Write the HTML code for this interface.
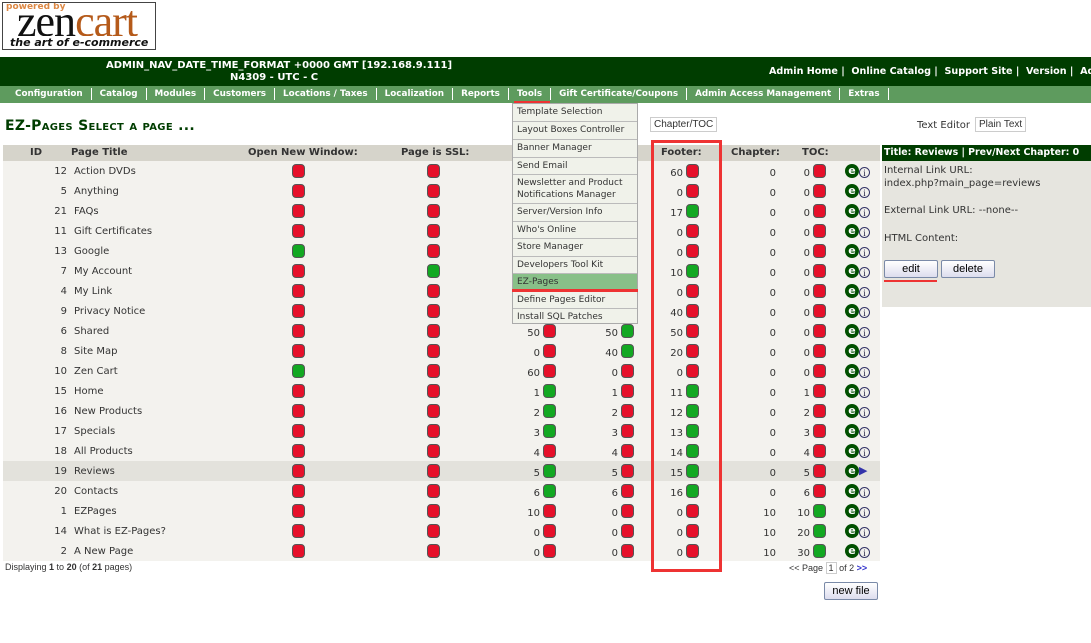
<!DOCTYPE html>
<html><head><meta charset="utf-8"><style>
*{margin:0;padding:0;box-sizing:border-box}
body{width:1091px;height:643px;position:relative;background:#fff;font-family:"DejaVu Sans","Liberation Sans",sans-serif;font-size:10px;color:#333;overflow:hidden}
.abs{position:absolute}
#logo{left:2px;top:2px;width:154px;height:48px;border:1px solid #444;background:#fff;overflow:hidden}
#top{left:0;top:57px;width:1091px;height:29px;background:#003d00;color:#fff;font-weight:bold;font-size:10px}
#nav{left:0;top:86px;width:1091px;height:17px;background:#5e9b5e;color:#fff;font-weight:bold;font-size:8.8px;line-height:17px;white-space:nowrap}
#nav span{display:inline-block;padding:0 8px;border-right:1px solid #fff;line-height:12px}
h1{position:absolute;left:5px;top:118px;font-size:14px;color:#003d00;font-weight:bold;font-variant:small-caps;letter-spacing:.3px}
.bg{left:3px;width:877px;height:20px;background:#f3f2ee}
#hdr{left:3px;top:145px;width:877px;height:16px;background:#d6d4cb;font-weight:bold;font-size:10px;color:#333;line-height:16px}
.r{position:absolute;left:0;width:1091px;height:20px;line-height:20px;font-size:10px;color:#333}
.r span{position:absolute}
.n{text-align:right;width:30px;top:3px}
.r span.n:first-child{top:1px}
.ic{width:13px;height:14px;border-radius:4px;top:3px;border:1px solid #555}
.R{background:#e6102a}.G{background:#12a822}
.e{width:14px;height:14px;border-radius:7px;background:#005000;color:#fff;font-weight:bold;font-size:11px;line-height:13px;text-align:center;top:3px}
.i{width:11px;height:11px;border-radius:6px;border:1px solid #336;color:#224;font-size:9px;line-height:10px;text-align:center;top:6px;font-family:"Liberation Serif",serif}
#menu{left:512px;top:103px;width:126px;height:221px;background:#f0f2ea;border:1px solid #aaa;font-size:9px;color:#333}
#menu div{border-bottom:1px solid #bbb;padding:2px 4px;height:18px;line-height:13px;white-space:nowrap}
.btn{border:1px solid #7a8aa8;background:linear-gradient(#fff,#dde);font-family:"Liberation Sans",sans-serif;font-size:11px;text-align:center;border-radius:2px;color:#000}
</style></head><body>
<div id="logo" class="abs">
<div class="abs" style="left:3px;top:0;color:#d84;font-size:9px;font-weight:bold;line-height:9px;background:#fff;z-index:2">powered by</div>
<div class="abs" style="left:14px;top:0px;font-family:'Liberation Serif',serif;font-size:44px;line-height:38px;letter-spacing:-1px"><span style="color:#111">zen</span><span style="color:#b55a1a">cart</span></div>
<div class="abs" style="left:7px;top:33px;font-size:11px;font-weight:bold;font-style:italic;color:#111;background:#fff">the art of e-commerce</div>
</div>
<div id="top" class="abs">
<div class="abs" style="left:106px;top:3px">ADMIN_NAV_DATE_TIME_FORMAT +0000 GMT [192.168.9.111]</div>
<div class="abs" style="left:230px;top:15px">N4309 - UTC - C</div>
<div class="abs" style="left:769px;top:9px;white-space:nowrap;font-size:9.6px">Admin Home |&nbsp; Online Catalog |&nbsp; Support Site |&nbsp; Version |&nbsp; Ad</div>
</div>
<div id="nav" class="abs"><span style="padding-left:15px">Configuration</span><span>Catalog</span><span>Modules</span><span>Customers</span><span>Locations / Taxes</span><span>Localization</span><span>Reports</span><span>Tools</span><span>Gift Certificate/Coupons</span><span>Admin Access Management</span><span>Extras</span></div>
<div class="abs" style="left:514px;top:101px;width:36px;height:2px;background:#e33"></div>
<h1>EZ-Pages Select a page ...</h1>
<div class="abs" style="left:650px;top:117px;border:1px solid #ccc;font-family:'Liberation Sans',sans-serif;font-size:10px;padding:1px 3px">Chapter/TOC</div>
<div class="abs" style="left:917px;top:120px;font-size:10px">Text Editor</div>
<div class="abs" style="left:975px;top:117px;border:1px solid #ccc;font-family:'Liberation Sans',sans-serif;font-size:10px;padding:1px 3px">Plain Text</div>

<div id="hdr" class="abs"><span class="abs" style="left:27px">ID</span><span class="abs" style="left:68px">Page Title</span><span class="abs" style="left:245px">Open New Window:</span><span class="abs" style="left:398px">Page is SSL:</span><span class="abs" style="left:658px">Footer:</span><span class="abs" style="left:728px">Chapter:</span><span class="abs" style="left:799px">TOC:</span></div>
<div class="abs bg" style="top:161px;height:400px"></div>
<div class="abs" style="left:3px;top:461px;width:877px;height:20px;background:#e3e2dc"></div>

<div class="r" style="top:161px"><span class="n" style="left:37px">12</span><span style="left:74px;top:1px">Action DVDs</span><span class="ic R" style="left:292px"></span><span class="ic R" style="left:427px"></span><span class="n" style="left:653px">60</span><span class="ic R" style="left:686px"></span><span class="n" style="left:746px">0</span><span class="n" style="left:780px">0</span><span class="ic R" style="left:813px"></span><span class="e" style="left:845px">e</span><span class="i" style="left:859px">i</span></div>
<div class="r" style="top:181px"><span class="n" style="left:37px">5</span><span style="left:74px;top:1px">Anything</span><span class="ic R" style="left:292px"></span><span class="ic R" style="left:427px"></span><span class="n" style="left:653px">0</span><span class="ic R" style="left:686px"></span><span class="n" style="left:746px">0</span><span class="n" style="left:780px">0</span><span class="ic R" style="left:813px"></span><span class="e" style="left:845px">e</span><span class="i" style="left:859px">i</span></div>
<div class="r" style="top:201px"><span class="n" style="left:37px">21</span><span style="left:74px;top:1px">FAQs</span><span class="ic R" style="left:292px"></span><span class="ic R" style="left:427px"></span><span class="n" style="left:653px">17</span><span class="ic G" style="left:686px"></span><span class="n" style="left:746px">0</span><span class="n" style="left:780px">0</span><span class="ic R" style="left:813px"></span><span class="e" style="left:845px">e</span><span class="i" style="left:859px">i</span></div>
<div class="r" style="top:221px"><span class="n" style="left:37px">11</span><span style="left:74px;top:1px">Gift Certificates</span><span class="ic R" style="left:292px"></span><span class="ic R" style="left:427px"></span><span class="n" style="left:653px">0</span><span class="ic R" style="left:686px"></span><span class="n" style="left:746px">0</span><span class="n" style="left:780px">0</span><span class="ic R" style="left:813px"></span><span class="e" style="left:845px">e</span><span class="i" style="left:859px">i</span></div>
<div class="r" style="top:241px"><span class="n" style="left:37px">13</span><span style="left:74px;top:1px">Google</span><span class="ic G" style="left:292px"></span><span class="ic R" style="left:427px"></span><span class="n" style="left:653px">0</span><span class="ic R" style="left:686px"></span><span class="n" style="left:746px">0</span><span class="n" style="left:780px">0</span><span class="ic R" style="left:813px"></span><span class="e" style="left:845px">e</span><span class="i" style="left:859px">i</span></div>
<div class="r" style="top:261px"><span class="n" style="left:37px">7</span><span style="left:74px;top:1px">My Account</span><span class="ic R" style="left:292px"></span><span class="ic G" style="left:427px"></span><span class="n" style="left:653px">10</span><span class="ic G" style="left:686px"></span><span class="n" style="left:746px">0</span><span class="n" style="left:780px">0</span><span class="ic R" style="left:813px"></span><span class="e" style="left:845px">e</span><span class="i" style="left:859px">i</span></div>
<div class="r" style="top:281px"><span class="n" style="left:37px">4</span><span style="left:74px;top:1px">My Link</span><span class="ic R" style="left:292px"></span><span class="ic R" style="left:427px"></span><span class="n" style="left:653px">0</span><span class="ic R" style="left:686px"></span><span class="n" style="left:746px">0</span><span class="n" style="left:780px">0</span><span class="ic R" style="left:813px"></span><span class="e" style="left:845px">e</span><span class="i" style="left:859px">i</span></div>
<div class="r" style="top:301px"><span class="n" style="left:37px">9</span><span style="left:74px;top:1px">Privacy Notice</span><span class="ic R" style="left:292px"></span><span class="ic R" style="left:427px"></span><span class="n" style="left:653px">40</span><span class="ic R" style="left:686px"></span><span class="n" style="left:746px">0</span><span class="n" style="left:780px">0</span><span class="ic R" style="left:813px"></span><span class="e" style="left:845px">e</span><span class="i" style="left:859px">i</span></div>
<div class="r" style="top:321px"><span class="n" style="left:37px">6</span><span style="left:74px;top:1px">Shared</span><span class="ic R" style="left:292px"></span><span class="ic R" style="left:427px"></span><span class="n" style="left:510px">50</span><span class="ic R" style="left:543px"></span><span class="n" style="left:588px">50</span><span class="ic G" style="left:621px"></span><span class="n" style="left:653px">50</span><span class="ic R" style="left:686px"></span><span class="n" style="left:746px">0</span><span class="n" style="left:780px">0</span><span class="ic R" style="left:813px"></span><span class="e" style="left:845px">e</span><span class="i" style="left:859px">i</span></div>
<div class="r" style="top:341px"><span class="n" style="left:37px">8</span><span style="left:74px;top:1px">Site Map</span><span class="ic R" style="left:292px"></span><span class="ic R" style="left:427px"></span><span class="n" style="left:510px">0</span><span class="ic R" style="left:543px"></span><span class="n" style="left:588px">40</span><span class="ic G" style="left:621px"></span><span class="n" style="left:653px">20</span><span class="ic R" style="left:686px"></span><span class="n" style="left:746px">0</span><span class="n" style="left:780px">0</span><span class="ic R" style="left:813px"></span><span class="e" style="left:845px">e</span><span class="i" style="left:859px">i</span></div>
<div class="r" style="top:361px"><span class="n" style="left:37px">10</span><span style="left:74px;top:1px">Zen Cart</span><span class="ic G" style="left:292px"></span><span class="ic R" style="left:427px"></span><span class="n" style="left:510px">60</span><span class="ic R" style="left:543px"></span><span class="n" style="left:588px">0</span><span class="ic R" style="left:621px"></span><span class="n" style="left:653px">0</span><span class="ic R" style="left:686px"></span><span class="n" style="left:746px">0</span><span class="n" style="left:780px">0</span><span class="ic R" style="left:813px"></span><span class="e" style="left:845px">e</span><span class="i" style="left:859px">i</span></div>
<div class="r" style="top:381px"><span class="n" style="left:37px">15</span><span style="left:74px;top:1px">Home</span><span class="ic R" style="left:292px"></span><span class="ic R" style="left:427px"></span><span class="n" style="left:510px">1</span><span class="ic G" style="left:543px"></span><span class="n" style="left:588px">1</span><span class="ic R" style="left:621px"></span><span class="n" style="left:653px">11</span><span class="ic G" style="left:686px"></span><span class="n" style="left:746px">0</span><span class="n" style="left:780px">1</span><span class="ic R" style="left:813px"></span><span class="e" style="left:845px">e</span><span class="i" style="left:859px">i</span></div>
<div class="r" style="top:401px"><span class="n" style="left:37px">16</span><span style="left:74px;top:1px">New Products</span><span class="ic R" style="left:292px"></span><span class="ic R" style="left:427px"></span><span class="n" style="left:510px">2</span><span class="ic G" style="left:543px"></span><span class="n" style="left:588px">2</span><span class="ic R" style="left:621px"></span><span class="n" style="left:653px">12</span><span class="ic G" style="left:686px"></span><span class="n" style="left:746px">0</span><span class="n" style="left:780px">2</span><span class="ic R" style="left:813px"></span><span class="e" style="left:845px">e</span><span class="i" style="left:859px">i</span></div>
<div class="r" style="top:421px"><span class="n" style="left:37px">17</span><span style="left:74px;top:1px">Specials</span><span class="ic R" style="left:292px"></span><span class="ic R" style="left:427px"></span><span class="n" style="left:510px">3</span><span class="ic G" style="left:543px"></span><span class="n" style="left:588px">3</span><span class="ic R" style="left:621px"></span><span class="n" style="left:653px">13</span><span class="ic G" style="left:686px"></span><span class="n" style="left:746px">0</span><span class="n" style="left:780px">3</span><span class="ic R" style="left:813px"></span><span class="e" style="left:845px">e</span><span class="i" style="left:859px">i</span></div>
<div class="r" style="top:441px"><span class="n" style="left:37px">18</span><span style="left:74px;top:1px">All Products</span><span class="ic R" style="left:292px"></span><span class="ic R" style="left:427px"></span><span class="n" style="left:510px">4</span><span class="ic R" style="left:543px"></span><span class="n" style="left:588px">4</span><span class="ic R" style="left:621px"></span><span class="n" style="left:653px">14</span><span class="ic G" style="left:686px"></span><span class="n" style="left:746px">0</span><span class="n" style="left:780px">4</span><span class="ic R" style="left:813px"></span><span class="e" style="left:845px">e</span><span class="i" style="left:859px">i</span></div>
<div class="r" style="top:461px"><span class="n" style="left:37px">19</span><span style="left:74px;top:1px">Reviews</span><span class="ic R" style="left:292px"></span><span class="ic R" style="left:427px"></span><span class="n" style="left:510px">5</span><span class="ic G" style="left:543px"></span><span class="n" style="left:588px">5</span><span class="ic R" style="left:621px"></span><span class="n" style="left:653px">15</span><span class="ic G" style="left:686px"></span><span class="n" style="left:746px">0</span><span class="n" style="left:780px">5</span><span class="ic R" style="left:813px"></span><span class="e" style="left:845px">e</span><span style="left:859px;top:0;color:#33a;font-size:11px">&#9654;</span></div>
<div class="r" style="top:481px"><span class="n" style="left:37px">20</span><span style="left:74px;top:1px">Contacts</span><span class="ic R" style="left:292px"></span><span class="ic R" style="left:427px"></span><span class="n" style="left:510px">6</span><span class="ic G" style="left:543px"></span><span class="n" style="left:588px">6</span><span class="ic R" style="left:621px"></span><span class="n" style="left:653px">16</span><span class="ic G" style="left:686px"></span><span class="n" style="left:746px">0</span><span class="n" style="left:780px">6</span><span class="ic R" style="left:813px"></span><span class="e" style="left:845px">e</span><span class="i" style="left:859px">i</span></div>
<div class="r" style="top:501px"><span class="n" style="left:37px">1</span><span style="left:74px;top:1px">EZPages</span><span class="ic R" style="left:292px"></span><span class="ic R" style="left:427px"></span><span class="n" style="left:510px">10</span><span class="ic R" style="left:543px"></span><span class="n" style="left:588px">0</span><span class="ic R" style="left:621px"></span><span class="n" style="left:653px">0</span><span class="ic R" style="left:686px"></span><span class="n" style="left:746px">10</span><span class="n" style="left:780px">10</span><span class="ic G" style="left:813px"></span><span class="e" style="left:845px">e</span><span class="i" style="left:859px">i</span></div>
<div class="r" style="top:521px"><span class="n" style="left:37px">14</span><span style="left:74px;top:1px">What is EZ-Pages?</span><span class="ic R" style="left:292px"></span><span class="ic R" style="left:427px"></span><span class="n" style="left:510px">0</span><span class="ic R" style="left:543px"></span><span class="n" style="left:588px">0</span><span class="ic R" style="left:621px"></span><span class="n" style="left:653px">0</span><span class="ic R" style="left:686px"></span><span class="n" style="left:746px">10</span><span class="n" style="left:780px">20</span><span class="ic G" style="left:813px"></span><span class="e" style="left:845px">e</span><span class="i" style="left:859px">i</span></div>
<div class="r" style="top:541px"><span class="n" style="left:37px">2</span><span style="left:74px;top:1px">A New Page</span><span class="ic R" style="left:292px"></span><span class="ic R" style="left:427px"></span><span class="n" style="left:510px">0</span><span class="ic R" style="left:543px"></span><span class="n" style="left:588px">0</span><span class="ic R" style="left:621px"></span><span class="n" style="left:653px">0</span><span class="ic R" style="left:686px"></span><span class="n" style="left:746px">10</span><span class="n" style="left:780px">30</span><span class="ic G" style="left:813px"></span><span class="e" style="left:845px">e</span><span class="i" style="left:859px">i</span></div>

<div id="menu" class="abs">
<div>Template Selection</div><div>Layout Boxes Controller</div><div>Banner Manager</div><div style="height:17px">Send Email</div>
<div style="height:29px;white-space:normal;line-height:12px">Newsletter and Product Notifications Manager</div>
<div>Server/Version Info</div><div style="height:17px">Who's Online</div><div>Store Manager</div><div style="height:17px">Developers Tool Kit</div>
<div style="background:#88c088">EZ-Pages</div><div style="height:17px">Define Pages Editor</div><div style="border:0">Install SQL Patches</div>
</div>
<div class="abs" style="left:512px;top:289px;width:126px;height:3px;background:#e33"></div>

<div class="abs" style="left:651px;top:140px;width:71px;height:432px;border:3px solid #ee3333"></div>

<div class="abs" style="left:882px;top:145px;width:209px;height:162px;background:#e6e5df"></div>
<div class="abs" style="left:882px;top:145px;width:209px;height:16px;background:#003d00;color:#fff;font-weight:bold;font-size:9.4px;line-height:16px;padding-left:2px;white-space:nowrap;overflow:hidden">Title: Reviews | Prev/Next Chapter: 0</div>
<div class="abs" style="left:884px;top:164px;font-size:10px;line-height:13px">Internal Link URL:<br>index.php?main_page=reviews</div>
<div class="abs" style="left:884px;top:205px;font-size:10px">External Link URL: --none--</div>
<div class="abs" style="left:884px;top:233px;font-size:10px">HTML Content:</div>
<div class="abs btn" style="left:884px;top:260px;width:54px;height:18px;line-height:16px">edit</div>
<div class="abs btn" style="left:941px;top:260px;width:54px;height:18px;line-height:16px">delete</div>
<div class="abs" style="left:884px;top:280px;width:53px;height:2px;background:#e33"></div>

<div class="abs" style="left:5px;top:562px;font-family:'Liberation Sans',sans-serif;font-size:9px">Displaying <b>1</b> to <b>20</b> (of <b>21</b> pages)</div>
<div class="abs" style="left:789px;top:563px;font-family:'Liberation Sans',sans-serif;font-size:9px;white-space:nowrap">&lt;&lt; Page <span style="border:1px solid #ccc;padding:0 2px">1</span> of 2 <span style="color:#33c;font-weight:bold">&gt;&gt;</span></div>
<div class="abs btn" style="left:824px;top:582px;width:54px;height:18px;line-height:16px">new file</div>
</body></html>
